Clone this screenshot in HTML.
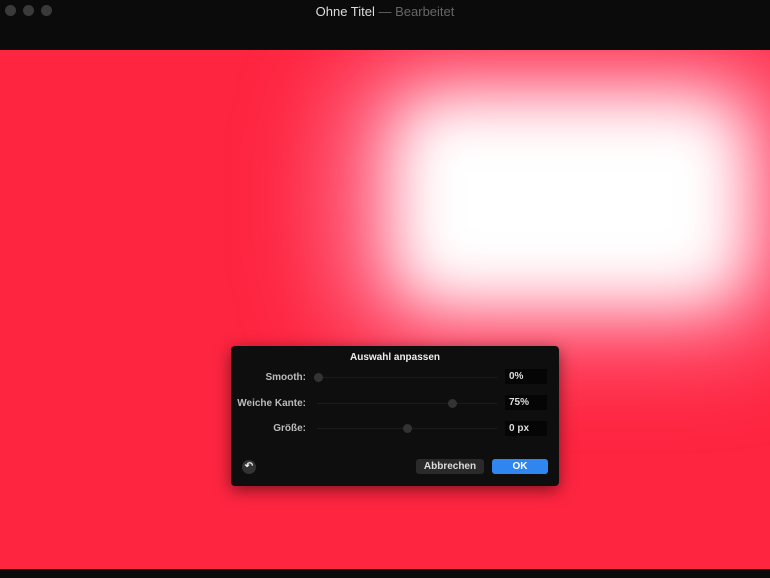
<!DOCTYPE html>
<html><head><meta charset="utf-8"><style>
body{margin:0;width:770px;height:578px;overflow:hidden;background:#0b0b0b;font-family:"Liberation Sans",sans-serif;position:relative}
.canvas{position:absolute;left:0;top:50px;width:770px;height:519px;background:#fe2540;overflow:hidden}
.blob{position:absolute;left:395px;top:48px;width:350px;height:205px;background:#fff;border-radius:50px;filter:blur(30px)}
.blob2{position:absolute;left:330px;top:0px;width:480px;height:300px;background:rgba(255,170,200,.6);border-radius:90px;filter:blur(45px)}
.title{position:absolute;top:4px;left:0;width:770px;text-align:center;font-size:13px;color:#ddd}
.title span{color:#666}
.dot{position:absolute;top:5px;width:11px;height:11px;border-radius:50%;background:#3a3a3a}
.dlg{position:absolute;left:231px;top:346px;width:328px;height:140px;background:#0e0e0e;border-radius:4px;box-shadow:0 4px 16px rgba(0,0,0,.5);color:#ddd;font-size:10px;font-weight:bold}
.dlg .t{position:absolute;top:6px;width:100%;text-align:center;color:#eee}
.lbl{position:absolute;right:253px;color:#bbb}
.trk{position:absolute;left:86px;width:180px;height:1px;background:#1c1c1c}
.knob{position:absolute;width:9px;height:9px;border-radius:50%;background:#333;top:-4px}
.val{position:absolute;left:274px;width:42px;height:15px;background:#050505;color:#ddd;padding-left:4px;line-height:16px;box-sizing:border-box}
.btn{position:absolute;top:113px;height:15px;line-height:15px;text-align:center;border-radius:3px}
</style></head><body>
<div class="dot" style="left:5px"></div><div class="dot" style="left:23px"></div><div class="dot" style="left:41px"></div>
<div class="title">Ohne Titel <span>— Bearbeitet</span></div>
<div class="canvas"><div class="blob2"></div><div class="blob"></div></div>
<div class="dlg">
<div class="t">Auswahl anpassen</div>
<div class="lbl" style="top:26px">Smooth:</div>
<div class="trk" style="top:31px"><div class="knob" style="left:-3px"></div></div>
<div class="val" style="top:23px">0%</div>
<div class="lbl" style="top:52px">Weiche Kante:</div>
<div class="trk" style="top:57px"><div class="knob" style="left:131px"></div></div>
<div class="val" style="top:49px">75%</div>
<div class="lbl" style="top:77px">Größe:</div>
<div class="trk" style="top:82px"><div class="knob" style="left:86px"></div></div>
<div class="val" style="top:75px">0 px</div>
<div style="position:absolute;left:11px;top:114px;width:14px;height:14px;border-radius:50%;background:#333;color:#eee;font-size:10px;text-align:center;line-height:14px">↶</div>
<div class="btn" style="left:185px;width:68px;background:#2a2a2a">Abbrechen</div>
<div class="btn" style="left:261px;width:56px;background:#2f86f0;color:#fff">OK</div>
</div>
</body></html>
